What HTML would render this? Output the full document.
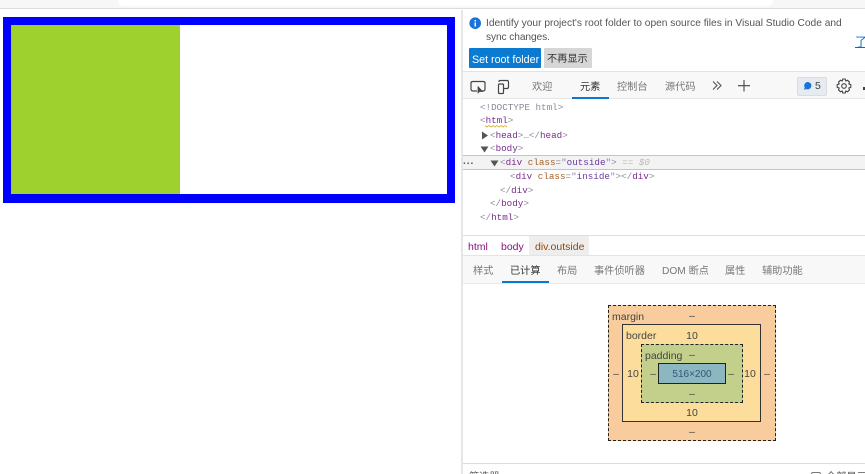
<!DOCTYPE html>
<html><head><meta charset="utf-8">
<style>
html,body{margin:0;padding:0;background:#fff;width:865px;height:474px;overflow:hidden}
body{position:relative;font-family:"Liberation Sans","Noto Sans CJK SC",sans-serif;color:#444}
div{position:absolute;box-sizing:border-box}
#w{left:0;top:0;width:865px;height:474px;overflow:hidden}
.t{position:absolute;white-space:nowrap;font-size:10.5px;line-height:14px}
.m{position:absolute;white-space:pre;font-family:"Liberation Mono","Noto Sans CJK SC",monospace;font-size:9.25px;line-height:14px;color:#8a8a9c}
.m b{font-weight:normal;color:#7a2a8c}.m i{font-style:normal;color:#a5622a}.m u{text-decoration:none;color:#6a3aa0}
.b{position:absolute;font-size:10.5px;line-height:12px;color:#444;white-space:nowrap;text-align:center}
</style></head><body><div id="w">
<div style="left:0;top:0;width:865px;height:9px;background:#f7f7f7;border-bottom:1px solid #ddd"></div>
<div style="left:118px;top:0;width:655px;height:6px;background:#fff;border-radius:0 0 5px 5px"></div>
<div style="left:3px;top:17px;width:452px;height:185.5px;background:#00f"></div>
<div style="left:11px;top:25px;width:435.5px;height:169px;background:#fff"></div>
<div style="left:11px;top:25px;width:169px;height:169px;background:#9ed02e"></div>

<div style="left:461px;top:10px;width:2px;height:464px;background:#e6e6e6"></div>

<svg style="position:absolute;left:469px;top:17px" width="13" height="13"><circle cx="6.2" cy="6.2" r="5.8" fill="#1a73d8"/><rect x="5.5" y="5.5" width="1.5" height="4" fill="#fff"/><rect x="5.5" y="3" width="1.5" height="1.500" fill="#fff"/></svg>
<div class="t" style="left:486px;top:17px;font-size:10.2px;color:#555">Identify your project's root folder to open source files in Visual Studio Code and</div>
<div class="t" style="left:486px;top:31px;font-size:10.2px;letter-spacing:-.1px;color:#555">sync changes.</div>
<div class="t" style="left:855px;top:35px;font-size:12px;color:#0a6cc4;text-decoration:underline">了</div>
<div style="left:469px;top:48px;width:72px;height:20px;background:#0a7bd0;border-radius:1px"></div>
<div class="t" style="left:472px;top:53px;color:#fff;font-size:10.7px">Set root folder</div>
<div style="left:544px;top:48px;width:48px;height:20px;background:#d6d6d6;border-radius:1px"></div>
<div class="t" style="left:547px;top:53px;font-size:10.2px;color:#333">不再显示</div>
<div style="left:463px;top:71px;width:402px;height:1px;background:#e2e2e2"></div>
<div style="left:463px;top:72px;width:402px;height:27px;background:#f8f8f8"></div>
<div style="left:463px;top:98px;width:402px;height:1px;background:#e6e6e6"></div>

<svg style="position:absolute;left:470px;top:79px" width="40" height="16" fill="none" stroke="#444" stroke-width="1.2"><path d="M7 12H3Q1 12 1 10V4Q1 2.500 3 2.500H13Q15 2.500 15 4V10Q15 12 13 12H12"/><path d="M8 7.500V14L9.500 12.500H12.500Z" fill="#444" stroke-width=".7"/><path d="M29 3V2.500Q29 1.500 30 1.500H37Q38.500 1.500 38.500 3V8Q38.500 9.500 37 9.500H33"/><rect x="28.500" y="5" width="5" height="9.500" rx="1"/></svg>
<div class="t" style="left:532px;top:81px;color:#777;font-size:10.2px">欢迎</div>
<div class="t" style="left:580px;top:81px;color:#333;font-size:10.2px">元素</div>
<div style="left:572px;top:96.500px;width:37px;height:2px;background:#0a78d0"></div>
<div class="t" style="left:617px;top:81px;color:#777;font-size:10.2px">控制台</div>
<div class="t" style="left:665px;top:81px;color:#777;font-size:10.2px">源代码</div>
<svg style="position:absolute;left:712px;top:80px" width="40" height="12" fill="none" stroke="#555" stroke-width="1.1"><path d="M1 1.500L5 5.500L1 9.500M5 1.500L9 5.500L5 9.500"/><path d="M32 0V11.500M26 5.700H38" stroke="#444"/></svg>
<div style="left:797px;top:77px;width:30px;height:19px;background:#e6ebf1;border:1px solid #dcdcdc;border-radius:2px"></div>
<svg style="position:absolute;left:803px;top:81px" width="10" height="10"><path d="M4.500 1A3.700 3.700 0 1 1 3 8L1 9L1.700 6.500A3.700 3.700 0 0 1 4.500 1Z" fill="#1a73d8"/></svg>
<div class="t" style="left:815px;top:79px;font-size:10.5px;color:#444">5</div>
<svg style="position:absolute;left:836px;top:78px" width="16" height="16" viewBox="0 0 16 16" fill="none" stroke="#444" stroke-width="1.1"><circle cx="8" cy="8" r="2.300"/><path d="M6.700 1H9.300L9.700 3L11.500 2.200L13.500 4.200L12.800 6L14.800 6.700V9.300L12.800 10L13.500 11.800L11.500 13.800L9.700 13L9.300 15H6.700L6.300 13L4.500 13.800L2.500 11.800L3.200 10L1.200 9.300V6.700L3.200 6L2.500 4.200L4.500 2.200L6.300 3Z" stroke-linejoin="round"/></svg>
<div style="left:863px;top:87px;width:2px;height:3px;background:#444"></div>

<div class="m" style="left:480px;top:100.500px">&lt;!DOCTYPE html&gt;</div>
<div class="m" style="left:480px;top:114px">&lt;<b>html</b>&gt;</div>
<svg style="position:absolute;left:485px;top:124px" width="24" height="4" fill="none" stroke="#d8b43a" stroke-width=".9"><path d="M0 1.500L2 3L4 1.500L6 3L8 1.500L10 3L12 1.500L14 3L16 1.500L18 3L20 1.500L22 3"/></svg>
<svg style="position:absolute;left:481px;top:131px" width="8" height="9"><path d="M1 .5L7 4.500L1 8.500Z" fill="#555"/></svg>
<div class="m" style="left:490px;top:128.500px">&lt;<b>head</b>&gt;…&lt;/<b>head</b>&gt;</div>
<svg style="position:absolute;left:480px;top:146px" width="9" height="7"><path d="M.5 .5H8.500L4.500 6.500Z" fill="#555"/></svg>
<div class="m" style="left:490px;top:142px">&lt;<b>body</b>&gt;</div>
<div style="left:463px;top:155px;width:402px;height:15px;background:#f3f3f3;border-top:1.500px solid #c4c4c4;border-bottom:1px solid #c4c4c4"></div>
<div class="t" style="left:463px;top:155px;font-size:10px;font-weight:bold;letter-spacing:1px;color:#555">...</div>
<svg style="position:absolute;left:490px;top:160px" width="9" height="7"><path d="M.5 .5H8.500L4.500 6.500Z" fill="#555"/></svg>
<div class="m" style="left:500px;top:156px">&lt;<b>div</b> <i>class</i>="<u>outside</u>"&gt; <span style="color:#bbb">== <em>$0</em></span></div>
<div class="m" style="left:510px;top:169.500px">&lt;<b>div</b> <i>class</i>="<u>inside</u>"&gt;&lt;/<b>div</b>&gt;</div>
<div class="m" style="left:500px;top:183.500px">&lt;/<b>div</b>&gt;</div>
<div class="m" style="left:490px;top:197px">&lt;/<b>body</b>&gt;</div>
<div class="m" style="left:480px;top:211px">&lt;/<b>html</b>&gt;</div>

<div style="left:463px;top:235px;width:402px;height:1px;background:#dedede"></div>
<div style="left:529px;top:236px;width:60px;height:20px;background:#eeeeee"></div>
<div class="t" style="left:468px;top:240px;color:#881280">html</div>
<div class="t" style="left:501px;top:240px;color:#881280">body</div>
<div class="t" style="left:535px;top:240px;color:#994500">div.outside</div>
<div style="left:463px;top:255px;width:402px;height:1px;background:#e4e4e4"></div>
<div style="left:463px;top:256px;width:402px;height:27px;background:#f8f8f8"></div>
<div style="left:463px;top:283px;width:402px;height:1px;background:#e8e8e8"></div>
<div class="t" style="left:473px;top:265px;color:#777;font-size:10.2px">样式</div>
<div class="t" style="left:510px;top:265px;color:#333;font-size:10.2px">已计算</div>
<div style="left:502px;top:280.500px;width:47px;height:2px;background:#0a78d0"></div>
<div class="t" style="left:557px;top:265px;color:#777;font-size:10.2px">布局</div>
<div class="t" style="left:594px;top:265px;color:#777;font-size:10.2px">事件侦听器</div>
<div class="t" style="left:662px;top:265px;color:#777;font-size:10.2px">DOM 断点</div>
<div class="t" style="left:725px;top:265px;color:#777;font-size:10.2px">属性</div>
<div class="t" style="left:762px;top:265px;color:#777;font-size:10.2px">辅助功能</div>

<div style="left:607.500px;top:305px;width:168.500px;height:136px;background:#f9cc9d;border:1px dashed #222"></div>
<div style="left:622px;top:324px;width:139px;height:98px;background:#fddd9b;border:1px solid #333"></div>
<div style="left:641px;top:344px;width:102px;height:59px;background:#c3d08b;border:1px dashed #222"></div>
<div style="left:658px;top:363px;width:68px;height:21px;background:#8cb6c0;border:1px solid #222"></div>
<div class="b" style="left:612px;top:311px">margin</div>
<div class="b" style="left:686px;top:310px;width:12px">–</div>
<div class="b" style="left:626px;top:330px">border</div>
<div class="b" style="left:682px;top:330px;width:20px">10</div>
<div class="b" style="left:645px;top:350px">padding</div>
<div class="b" style="left:686px;top:349px;width:12px">–</div>
<div class="b" style="left:658px;top:369px;width:68px;font-size:10px;color:#2f5a78">516×200</div>
<div class="b" style="left:610px;top:368px;width:12px">–</div>
<div class="b" style="left:623px;top:368px;width:20px">10</div>
<div class="b" style="left:647px;top:368px;width:12px">–</div>
<div class="b" style="left:725px;top:368px;width:12px">–</div>
<div class="b" style="left:740px;top:368px;width:20px">10</div>
<div class="b" style="left:761px;top:368px;width:12px">–</div>
<div class="b" style="left:686px;top:388px;width:12px">–</div>
<div class="b" style="left:682px;top:407px;width:20px">10</div>
<div class="b" style="left:686px;top:426px;width:12px">–</div>

<div style="left:463px;top:463px;width:402px;height:1px;background:#dcdcdc"></div>
<div class="t" style="left:469px;top:471px;font-size:10.2px;color:#555">筛选器</div>
<div style="left:811px;top:472px;width:10px;height:10px;border:1px solid #777;border-radius:2px"></div>
<div class="t" style="left:826px;top:471px;font-size:10.2px;color:#555">全部显示</div>
</div></body></html>
